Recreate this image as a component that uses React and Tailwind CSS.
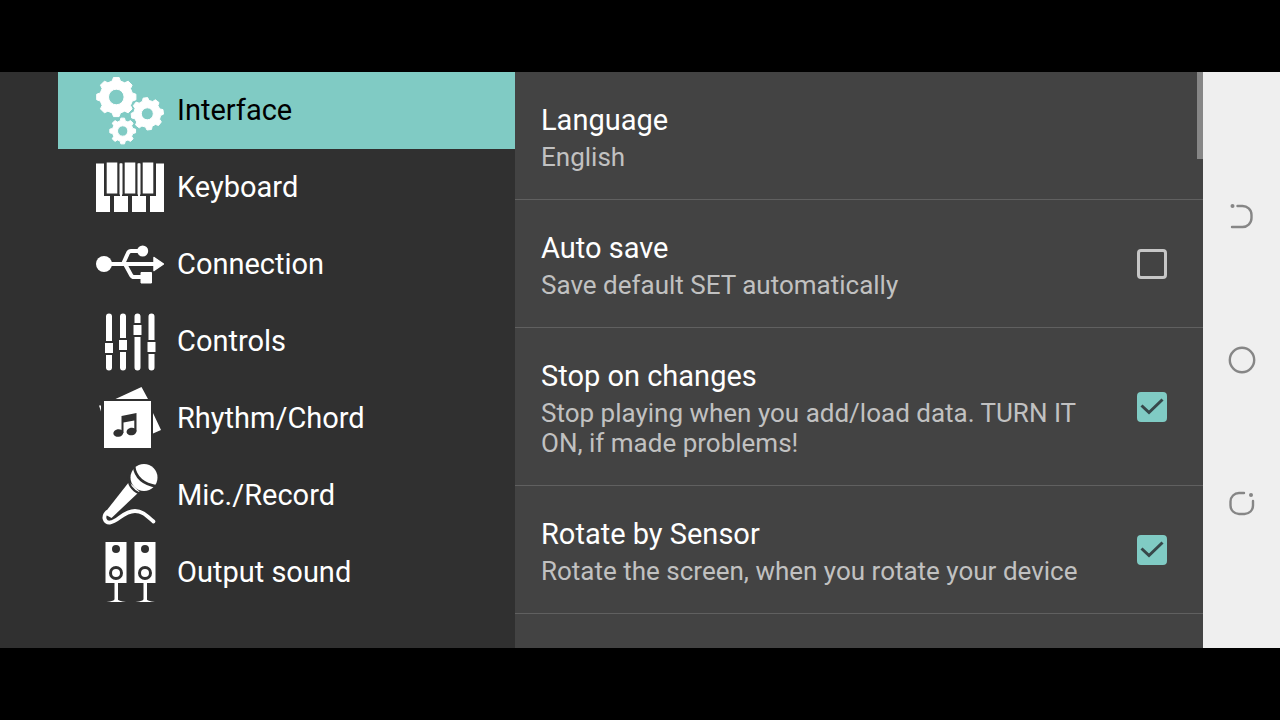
import { useState } from 'react'

// Closed outline of a gear wheel with a round hole in the middle
function gearPath(cx, cy, outer, root, hole, teeth, turn) {
  const step = (Math.PI * 2) / teeth
  const at = (r, a) => `${(cx + r * Math.cos(a)).toFixed(2)} ${(cy + r * Math.sin(a)).toFixed(2)}`
  const points = []
  for (let i = 0; i < teeth; i++) {
    const a = i * step + turn
    points.push(at(root, a - step * 0.32), at(outer, a - step * 0.18), at(outer, a + step * 0.18), at(root, a + step * 0.32))
  }
  return `M${points.join('L')}Z M${cx - hole} ${cy}a${hole} ${hole} 0 1 0 ${hole * 2} 0a${hole} ${hole} 0 1 0 ${-hole * 2} 0Z`
}

const iconProps = { viewBox: '0 0 68 68', className: 'size-[68px] shrink-0', fill: 'currentColor', 'aria-hidden': true }

function GearsIcon() {
  return (
    <svg {...iconProps} fillRule="evenodd" stroke="currentColor" strokeWidth="1" strokeLinejoin="round">
      <path d={gearPath(20.3, 20, 19.8, 16.5, 7.8, 8, Math.PI / 2)} />
      <path d={gearPath(51.3, 36.8, 16.2, 13.4, 6, 8, 1.45)} />
      <path d={gearPath(26.7, 54, 13, 10.4, 5.2, 8, Math.PI / 2)} />
    </svg>
  )
}

function PianoIcon() {
  return (
    <svg {...iconProps}>
      <path d="M0 9.500h68v48.500H0z" />
      <path d="M16 30v29M34 30v29M52 30v29" stroke="#303030" strokeWidth="4" />
      <path d="M8 8h16v34H8zM26 8h16v34H26zM44 8h16v34H44z" fill="#303030" />
      <path d="M10.700 8.500h10.600v31H10.700zM28.700 8.500h10.600v31H28.700zM46.700 8.500h10.600v31H46.700z" />
      <path d="M23.500 9.500h3v31h-3zM41.500 9.500h3v31h-3z" />
    </svg>
  )
}

function UsbIcon() {
  return (
    <svg {...iconProps}>
      <circle cx="8" cy="33" r="8" />
      <path d="M58 26.500L67.500 33 58 39.500z" stroke="currentColor" strokeWidth="1.500" strokeLinejoin="round" />
      <circle cx="46.700" cy="20" r="5.500" />
      <path d="M45 41.500h10.500V52H45z" stroke="currentColor" strokeWidth="1" strokeLinejoin="round" />
      <path d="M8 33h50M27 33l5-11q1-2 3-2h10M29 33l6 11q1 2 3 2h8" fill="none" stroke="currentColor" strokeWidth="4" />
    </svg>
  )
}

function SlidersIcon() {
  return (
    <svg {...iconProps}>
      <path d="M13 8.500v51M27 8.500v51M41.500 8.500v51M55.500 8.500v51" stroke="currentColor" strokeWidth="6" strokeLinecap="round" />
      <g stroke="#303030" strokeWidth="2">
        <path d="M8 34h10v12H8zM22 31h10v12H22zM36.500 16h10v12h-10zM50.500 33h10v12h-10z" />
      </g>
    </svg>
  )
}

function MusicIcon() {
  return (
    <svg {...iconProps}>
      <path d="M19.500 14L45.500 2l6.500 12zM3 20.500h2v6zM57 28l8 17-8 3.500z" />
      <path d="M8 16h47v47H8z" />
      <g fill="#303030">
        <ellipse cx="22.300" cy="48" rx="5" ry="3.800" transform="rotate(-12 22.300 48)" />
        <ellipse cx="35.500" cy="46.500" rx="5" ry="3.800" transform="rotate(-12 35.500 46.500)" />
        <path d="M25.500 31l15-3v18.500h-2.200V35.500L27.500 37.500V48h-2z" />
      </g>
    </svg>
  )
}

function MicIcon() {
  return (
    <svg {...iconProps}>
      <circle cx="48" cy="15.500" r="13.500" />
      <path d="M33 20L43.500 29.500 15.500 56l-5.500-3 1-5z" />
      <path d="M43.500 31.500Q31.500 26 32.500 14" fill="none" stroke="#303030" strokeWidth="2" />
      <path d="M38 4q2 17 23 20.500" fill="none" stroke="#303030" strokeWidth="2.600" />
      <path d="M11 50c-5 5-2 11 3 10.500 8-.5 13-11.500 25-11.500 8 0 12 5 18.500 10.500" fill="none" stroke="currentColor" strokeWidth="3.800" strokeLinecap="round" />
    </svg>
  )
}

function SpeakersIcon() {
  return (
    <svg {...iconProps}>
      {[9.5, 38.5].map((x) => (
        <g key={x} transform={`translate(${x} 3)`}>
          <path d="M0 0h21v41H0zM9 41h3.500v17H9z" />
          <path d="M1 60q8-1 8.500-3h2.500q.5 2 8.500 3z" />
          <circle cx="10.500" cy="7" r="4" fill="#303030" />
          <circle cx="10.500" cy="31" r="5.500" stroke="#303030" strokeWidth="3" />
        </g>
      ))}
    </svg>
  )
}

const sections = [
  { name: 'Interface', Icon: GearsIcon },
  { name: 'Keyboard', Icon: PianoIcon },
  { name: 'Connection', Icon: UsbIcon },
  { name: 'Controls', Icon: SlidersIcon },
  { name: 'Rhythm/Chord', Icon: MusicIcon },
  { name: 'Mic./Record', Icon: MicIcon },
  { name: 'Output sound', Icon: SpeakersIcon },
]

const options = [
  { id: 'auto-save', title: 'Auto save', summary: 'Save default SET automatically', on: false },
  { id: 'stop-on-changes', title: 'Stop on changes', summary: 'Stop playing when you add/load data. TURN IT ON, if made problems!', on: true },
  { id: 'rotate', title: 'Rotate by Sensor', summary: 'Rotate the screen, when you rotate your device', on: true },
]

function RowText({ title, summary }) {
  return (
    <>
      <span className="block text-[29px] leading-10 text-white">{title}</span>
      <span className="mt-[2px] block text-[26px] leading-[30px] text-[#c1c1c1]">{summary}</span>
    </>
  )
}

function OptionRow({ id, title, summary, on }) {
  const [checked, setChecked] = useState(on)

  return (
    <div className="flex items-center gap-9 border-b border-[#606060] pt-7 pr-9 pb-[27px] pl-[26px]">
      <label htmlFor={id} className="flex-1">
        <RowText title={title} summary={summary} />
      </label>
      <span className="relative size-[30px] shrink-0">
        <input
          id={id}
          type="checkbox"
          checked={checked}
          onChange={(e) => setChecked(e.target.checked)}
          className="block size-[30px] appearance-none rounded-[4px] border-[3px] border-[#c6c6c6] checked:border-[#80cbc4] checked:bg-[#80cbc4]"
        />
        {checked && (
          <svg viewBox="0 0 30 30" className="pointer-events-none absolute inset-0" fill="none" stroke="#37474a" strokeWidth="3">
            <path d="M4.500 13.500l7.500 7L25.500 7.500" />
          </svg>
        )}
      </span>
    </div>
  )
}

function NavBar() {
  const icon = { viewBox: '0 0 30 30', className: 'size-[30px]', fill: 'none', stroke: '#868686', strokeWidth: 2.4, strokeLinecap: 'round' }

  return (
    <nav className="flex w-[77px] shrink-0 flex-col items-center justify-around bg-[#efefef] py-[72px]">
      <button type="button" aria-label="Back">
        <svg {...icon}>
          <path d="M10.500 5H15a9 9 0 0 1 9.500 9v3a9 9 0 0 1-9.500 9H5" />
          <circle cx="5.500" cy="5" r="2" fill="#868686" stroke="none" />
        </svg>
      </button>
      <button type="button" aria-label="Home">
        <svg {...icon}>
          <circle cx="15" cy="15" r="12.200" />
        </svg>
      </button>
      <button type="button" aria-label="Recent apps">
        <svg {...icon}>
          <path d="M17 4h-5a8.500 8.500 0 0 0-8.500 8.500v4A8.500 8.500 0 0 0 12 25h5.500a8.500 8.500 0 0 0 8.500-8.500V12" />
          <circle cx="24" cy="6" r="2" fill="#868686" stroke="none" />
        </svg>
      </button>
    </nav>
  )
}

export default function App() {
  const [active, setActive] = useState('Interface')

  return (
    <div className="flex min-h-screen bg-black py-[72px] font-[Roboto,sans-serif]">
      {/* Sections */}
      <aside className="w-[515px] shrink-0 bg-[#303030] pl-[58px]">
        {sections.map(({ name, Icon }) => (
          <button
            key={name}
            type="button"
            onClick={() => setActive(name)}
            className={`flex h-[77px] w-full items-center gap-[13px] pl-[38px] text-left text-[29px] ${active === name ? 'bg-[#80cbc4]' : ''}`}
          >
            <span className="text-white">
              <Icon />
            </span>
            <span className={active === name ? 'text-black' : 'text-white'}>{name}</span>
          </button>
        ))}
      </aside>

      {/* Settings of the active section */}
      <main className="relative flex-1 bg-[#434343]">
        <button type="button" className="block w-full border-b border-[#606060] pt-7 pr-9 pb-[27px] pl-[26px] text-left">
          <RowText title="Language" summary="English" />
        </button>
        {options.map((option) => (
          <OptionRow key={option.id} {...option} />
        ))}
        <div className="absolute top-0 right-0 h-[87px] w-[6px] bg-[#868686]" />
      </main>

      <NavBar />
    </div>
  )
}
